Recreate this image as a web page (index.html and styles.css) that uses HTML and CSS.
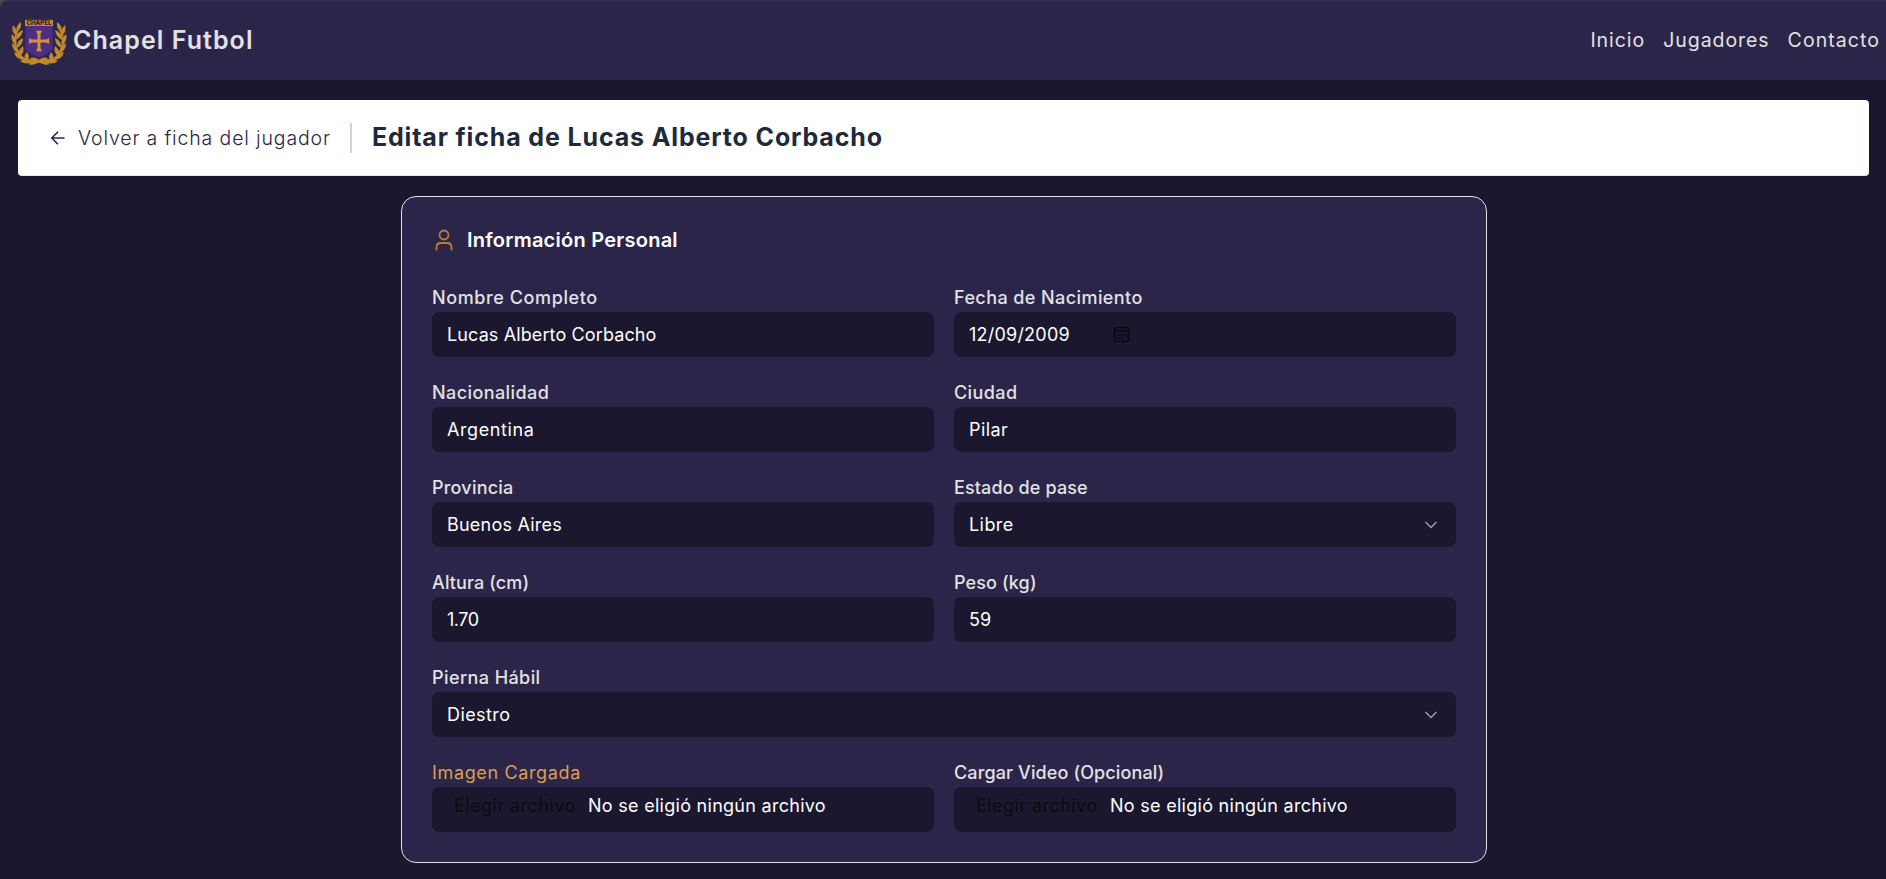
FILE: index.html
```html
<!DOCTYPE html>
<html lang="es">
<head>
<meta charset="utf-8">
<title>Chapel Futbol</title>
<link rel="stylesheet" href="styles.css">
</head>
<body>
<div class="window-edge">
<header class="topbar">
  <div class="brand">
    <svg class="crest" viewBox="11 17 56 50">
      <defs>
        <g id="branch" fill="#c08a2c">
          <path d="M19 27C13 38 14 53 24 59Q30 62 37 61L47 64" fill="none" stroke="#c08a2c" stroke-width="2"/>
          <path d="M21 22Q22 28 17 32Q15 26 21 22Z"/>
          <path d="M13 25Q18 30 16 36Q11 31 13 25Z"/>
          <path d="M23 30Q22 37 16 40Q16 32 23 30Z"/>
          <path d="M12 34Q17 39 16 45Q10 41 12 34Z"/>
          <path d="M23 38Q23 45 17 48Q16 41 23 38Z"/>
          <path d="M12 43Q18 46 19 53Q12 51 12 43Z"/>
          <path d="M23 46Q25 52 20 56Q17 50 23 46Z"/>
          <path d="M14 52Q22 53 25 60Q16 60 14 52Z"/>
          <path d="M27 52Q31 58 27 61Q22 57 27 52Z"/>
          <path d="M20 61Q27 57 34 61Q27 66 20 61Z"/>
          <path d="M30 58Q36 56 40 61Q34 66 28 64Q34 62 30 58Z"/>
        </g>
      </defs>
      <use href="#branch"/>
      <use href="#branch" transform="translate(78 0) scale(-1 1)"/>
      <path d="M25 19H53V50Q48 54 39 58Q30 54 25 50Z" fill="#4d2d86" stroke="#38245f"/>
      <path d="M25 20H53V26H25Z" fill="#c08a2c"/>
      <text class="crest-text" x="39" y="25.2" textLength="25" lengthAdjust="spacingAndGlyphs" text-anchor="middle">CHAPEL</text>
      <path d="M36 31L39 30.500L42 31L40.500 34V39.500H46L49 38V44L46 42.500H40.500V48L42 51L39 51.500L36 51L37.500 48V42.500H32L29 44V38L32 39.500H37.500V34Z" fill="#cf9330"/>
    </svg>
    <span class="brand-name">Chapel Futbol</span>
  </div>
  <nav class="nav"><a>Inicio</a><a>Jugadores</a><a class="nav-last">Contacto</a></nav>
</header>
</div>

<section class="titlebar">
  <a class="back">
    <svg class="back-icon" viewBox="0 0 16 16"><path d="M14.500 8H2M8 1.800L1.800 8L8 14.200"/></svg>
    <span>Volver a ficha del jugador</span>
  </a>
  <h1 class="title">Editar ficha de Lucas Alberto Corbacho</h1>
</section>

<main class="card">
  <div class="section-head">
    <svg class="user-icon" viewBox="0 0 18 22"><circle cx="9" cy="6" r="4.500"/><path d="M1.500 21.500V18.500Q1.500 14 6 14H12Q16.500 14 16.500 18.500V21.500"/></svg>
    <h2 class="section-title">Información Personal</h2>
  </div>
  <div class="grid">
    <div class="field"><label class="label t4">Nombre Completo</label><div class="control t1">Lucas Alberto Corbacho</div></div>
    <div class="field"><label class="label t3">Fecha de Nacimiento</label>
      <div class="control t2"><span class="date">12/09/2009</span>
        <svg class="calendar" viewBox="0 0 16 16"><rect x="1.500" y="1.500" width="13" height="13" rx="1.500"/><path d="M1.500 4.500H14.500"/><path class="dots" d="M4 8.500H13M4 11.500H10"/></svg>
      </div></div>
    <div class="field"><label class="label t3">Nacionalidad</label><div class="control t4">Argentina</div></div>
    <div class="field"><label class="label t3">Ciudad</label><div class="control t3">Pilar</div></div>
    <div class="field"><label class="label t2">Provincia</label><div class="control t2">Buenos Aires</div></div>
    <div class="field"><label class="label t1">Estado de pase</label>
      <div class="control select t3">Libre<svg class="chevron" viewBox="0 0 14 8"><path d="M1.500 1L7 6.500L12.500 1"/></svg></div></div>
    <div class="field"><label class="label t1">Altura (cm)</label><div class="control tight">1.70</div></div>
    <div class="field"><label class="label t1">Peso (kg)</label><div class="control t1">59</div></div>
    <div class="field wide"><label class="label t3">Pierna Hábil</label>
      <div class="control select t3">Diestro<svg class="chevron" viewBox="0 0 14 8"><path d="M1.500 1L7 6.500L12.500 1"/></svg></div></div>
    <div class="field"><label class="label loaded">Imagen Cargada</label>
      <div class="control file"><span class="file-button">Elegir archivo</span><span>No se eligió ningún archivo</span></div></div>
    <div class="field"><label class="label t1">Cargar Video (Opcional)</label>
      <div class="control file"><span class="file-button">Elegir archivo</span><span>No se eligió ningún archivo</span></div></div>
  </div>
</main>
</body>
</html>
```
FILE: styles.css
```css
* { box-sizing: border-box; }
html { background: #1b172e; }
body {
  margin: 0;
  height: 879px;
  overflow: hidden;
  background: #1b172e;
  color: #fff;
  font-family: Inter, "Open Sans", sans-serif;
  font-size: 18px;
}
svg { display: block; flex: none; fill: none; }

.window-edge { background: #4a4a4f; }
.topbar {
  display: flex;
  justify-content: space-between;
  align-items: center;
  height: 80px;
  padding: 0 6px 1px 11px;
  background: #2c254a;
  border-top: 1px solid #35304c;
  border-top-left-radius: 8px;
  color: #e2e2e2;
}
.brand { display: flex; align-items: center; gap: 6px; }
.crest { width: 56px; height: 50px; margin-top: 3px; }
.crest-text { font-size: 5.500px; font-weight: 800; fill: #2b1c2a; }
.brand-name { font-size: 25px; font-weight: 600; letter-spacing: 1.060px; }
.nav { display: flex; gap: 18px; font-size: 19.500px; letter-spacing: 0.950px; }
.nav-last { letter-spacing: 1.060px; }

.titlebar {
  display: flex;
  align-items: center;
  height: 76px;
  margin: 20px 17px 0 18px;
  padding-left: 32px;
  background: #fff;
  border-bottom: 1px solid #e2e8f0;
  border-radius: 4px;
}
.back {
  display: flex;
  align-items: center;
  gap: 12px;
  height: 30px;
  padding-right: 19px;
  border-right: 2px solid #cbd5e1;
  color: #2c254a;
  font-size: 19.500px;
  font-weight: 300;
  letter-spacing: 0.860px;
}
.back-icon { width: 16px; height: 16px; stroke: #2c254a; stroke-width: 1.600; }
.title {
  margin: -1px 0 0 20px;
  color: #1e293b;
  font-size: 25px;
  font-weight: 700;
  letter-spacing: 0.860px;
}

.card {
  width: 1086px;
  height: 667px;
  margin: 20px 0 0 401px;
  padding: 30px;
  background: #2c254a;
  border: 1px solid #e2e2e2;
  border-radius: 15px;
}
.section-head { display: flex; align-items: center; gap: 13px; height: 26px; padding-left: 4px; }
.user-icon { width: 18px; height: 22px; margin: -1px 1px 0 -1px; stroke: #b9812a; stroke-width: 1.800; }
.section-title { margin: 0; font-size: 20px; font-weight: 600; letter-spacing: 0.250px; }

.grid {
  display: grid;
  grid-template-columns: 1fr 1fr;
  gap: 21px 20px;
  margin-top: 30px;
}
.wide { grid-column: 1 / -1; }
.label {
  display: block;
  height: 29px;
  line-height: 29px;
  color: #e2e2e2;
  font-weight: 500;
}
.control {
  display: flex;
  align-items: center;
  height: 45px;
  padding: 0 15px;
  background: #1b172e;
  border-radius: 7px;
}
.select { justify-content: space-between; padding-right: 18px; }
.chevron { width: 14px; height: 8px; stroke: #9c99a6; stroke-width: 1.500; }
.date { width: 144px; }
.calendar { width: 17px; height: 17px; stroke: #08070d; stroke-width: 1.300; }
.dots { stroke-dasharray: 2 1.500; stroke-width: 1.500; }
.file { align-items: flex-start; padding: 8px 22px; letter-spacing: 0.280px; }
.file-button { width: 134px; color: #0c0b10; letter-spacing: 0.450px; }
.loaded { color: #d9a04e; font-weight: 400; letter-spacing: 0.640px; }

.tight { letter-spacing: -0.500px; }
.t1 { letter-spacing: 0.120px; }
.t2 { letter-spacing: 0.220px; }
.t3 { letter-spacing: 0.420px; }
.t4 { letter-spacing: 0.600px; }
```
